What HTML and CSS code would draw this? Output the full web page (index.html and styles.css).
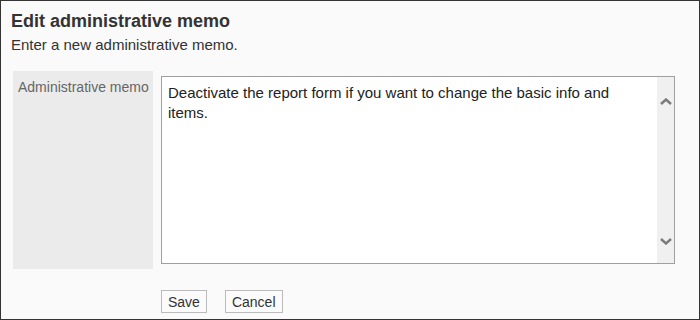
FILE: index.html
```
<!DOCTYPE html>
<html lang="en">
<head>
<meta charset="utf-8">
<title>Edit administrative memo</title>
<link rel="stylesheet" href="styles.css">
</head>
<body>
<div class="page">
  <h1 class="title">Edit administrative memo</h1>
  <p class="lead">Enter a new administrative memo.</p>
  <div class="form-row">
    <div class="label-cell">Administrative memo</div>
    <div class="field-cell">
      <div class="memo-box">
        <textarea class="memo-input">Deactivate the report form if you want to change the basic info and items.</textarea>
        <div class="scrollbar">
          <svg class="chev" width="12" height="7" viewBox="0 0 12 7"><polyline points="1,6 6,1.5 11,6" fill="none" stroke="#7a7a7a" stroke-width="2.4"/></svg>
          <svg class="chev" width="12" height="7" viewBox="0 0 12 7"><polyline points="1,1 6,5.5 11,1" fill="none" stroke="#7a7a7a" stroke-width="2.4"/></svg>
        </div>
      </div>
    </div>
  </div>
  <div class="actions">
    <button class="btn" type="button">Save</button>
    <button class="btn" type="button">Cancel</button>
  </div>
</div>
</body>
</html>
```
FILE: styles.css
```
html, body {
  margin: 0;
  padding: 0;
}
body {
  width: 700px;
  height: 320px;
  box-sizing: border-box;
  border: 1px solid #333;
  background: #fafafa;
  font-family: "Liberation Sans", Arial, sans-serif;
  color: #333;
  overflow: hidden;
}
.page {
  padding: 9px 12px 0 12px;
}
.title {
  margin: 0 0 0 -2px;
  font-size: 18px;
  line-height: 22px;
  font-weight: bold;
  color: #333;
}
.lead {
  margin: 4px 0 0 -2px;
  font-size: 15px;
  line-height: 18px;
  color: #333;
}
.form-row {
  margin-top: 17px;
  display: flex;
}
.label-cell {
  width: 140px;
  box-sizing: border-box;
  padding: 7px 2px 7px 5px;
  background: #ebebeb;
  color: #666;
  font-size: 14px;
  line-height: 18px;
  height: 198px;
  white-space: nowrap;
}
.field-cell {
  padding: 5px 0 5px 8px;
}
.memo-box {
  width: 514px;
  height: 188px;
  box-sizing: border-box;
  border: 1px solid #a0a0a0;
  background: #fff;
  display: flex;
}
.memo-input {
  flex: 1;
  border: 0;
  margin: 0;
  padding: 6px 8px 6px 6px;
  font-family: "Liberation Sans", Arial, sans-serif;
  font-size: 15px;
  line-height: 20px;
  color: #222;
  background: #fff;
  resize: none;
  outline: none;
  overflow: hidden;
}
.scrollbar {
  width: 17px;
  background: #f0f0f0;
  display: flex;
  flex-direction: column;
  justify-content: space-between;
  align-items: center;
  padding: 21px 0 18px;
  box-sizing: border-box;
}
.chev {
  display: block;
}
.actions {
  margin-top: 21px;
  padding-left: 148px;
  display: flex;
  gap: 18px;
}
.btn {
  height: 23px;
  box-sizing: border-box;
  border: 1px solid #bbb;
  background: #fbfbfb;
  color: #333;
  font-family: "Liberation Sans", Arial, sans-serif;
  font-size: 14px;
  line-height: 19px;
  padding: 2px 6px 0;
  margin: 0;
  border-radius: 0;
}
```
